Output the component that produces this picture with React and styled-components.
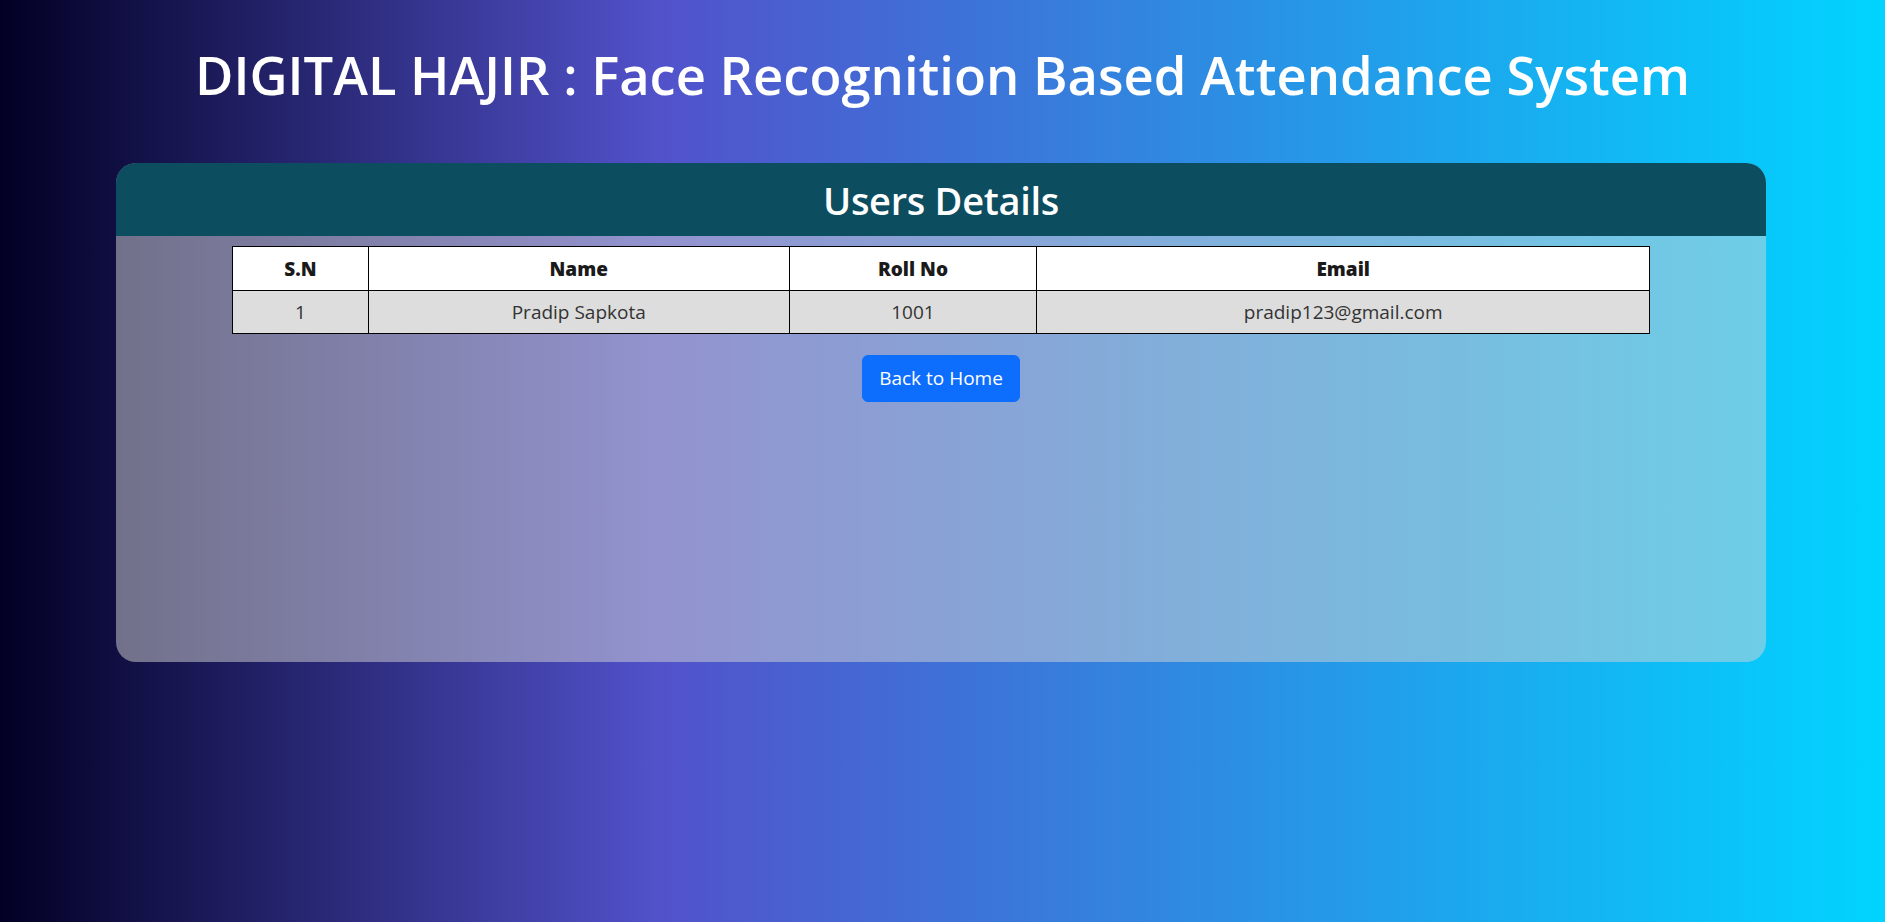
import React from "react";
import styled, { createGlobalStyle } from "styled-components";

const GlobalStyle = createGlobalStyle`
  * { box-sizing: border-box; }
  html, body { margin: 0; padding: 0; }
  body {
    font-family: "Open Sans", "Noto Sans", "DejaVu Sans", sans-serif;
    color: #212529;
  }
`;

const Page = styled.div`
  min-height: 100vh;
  background: linear-gradient(90deg, #020024 0%, #5252cb 35%, #00d4ff 100%);
  display: flex;
  flex-direction: column;
  align-items: center;
  padding-top: 43px;
`;

const Title = styled.h1`
  margin: 0;
  color: #ffffff;
  font-size: 52.5px;
  font-weight: 600;
  line-height: 63px;
  text-align: center;
`;

const Card = styled.section`
  width: 1650px;
  height: 499px;
  margin-top: 57px;
  margin-right: 3px;
  border-radius: 20px;
  overflow: hidden;
  background: rgba(211, 211, 211, 0.5);
  display: flex;
  flex-direction: column;
  align-items: center;
`;

const CardHeader = styled.header`
  width: 100%;
  height: 73px;
  background: #0c4d60;
  color: #ffffff;
  display: flex;
  align-items: center;
  justify-content: center;
`;

const CardTitle = styled.h2`
  margin: 0;
  font-size: 38px;
  font-weight: 600;
  letter-spacing: -0.3px;
`;

const Table = styled.table`
  width: 1418px;
  margin-top: 10px;
  border-collapse: collapse;
  font-size: 19px;
  text-align: center;
`;

const HeadCell = styled.th`
  width: ${(p) => p.$w}px;
  background: #ffffff;
  border: 1px solid #000;
  padding: 6px 8px;
  height: 44px;
  font-weight: 800;
  color: #1a1a1a;
`;

const Cell = styled.td`
  background: #dddddd;
  border: 1px solid #000;
  padding: 6px 8px;
  height: 43px;
  color: #333;
`;

const Button = styled.button`
  margin-top: 21px;
  background: #0d6efd;
  color: #fff;
  border: 1px solid #0d6efd;
  border-radius: 6px;
  padding: 8px 16px;
  font-family: inherit;
  font-size: 19px;
  line-height: 29px;
  cursor: pointer;
`;

const columns = [
  { key: "sn", label: "S.N", w: 136 },
  { key: "name", label: "Name", w: 421 },
  { key: "roll", label: "Roll No", w: 248 },
  { key: "email", label: "Email", w: 613 },
];

const users = [
  { sn: 1, name: "Pradip Sapkota", roll: "1001", email: "pradip123@gmail.com" },
];

export default function App() {
  return (
    <>
      <GlobalStyle />
      <Page>
        <Title>DIGITAL HAJIR : Face Recognition Based Attendance System</Title>
        <Card>
          <CardHeader>
            <CardTitle>Users Details</CardTitle>
          </CardHeader>
          <Table>
            <thead>
              <tr>
                {columns.map((c) => (
                  <HeadCell key={c.key} $w={c.w}>
                    {c.label}
                  </HeadCell>
                ))}
              </tr>
            </thead>
            <tbody>
              {users.map((u) => (
                <tr key={u.sn}>
                  {columns.map((c) => (
                    <Cell key={c.key}>{u[c.key]}</Cell>
                  ))}
                </tr>
              ))}
            </tbody>
          </Table>
          <Button>Back to Home</Button>
        </Card>
      </Page>
    </>
  );
}
